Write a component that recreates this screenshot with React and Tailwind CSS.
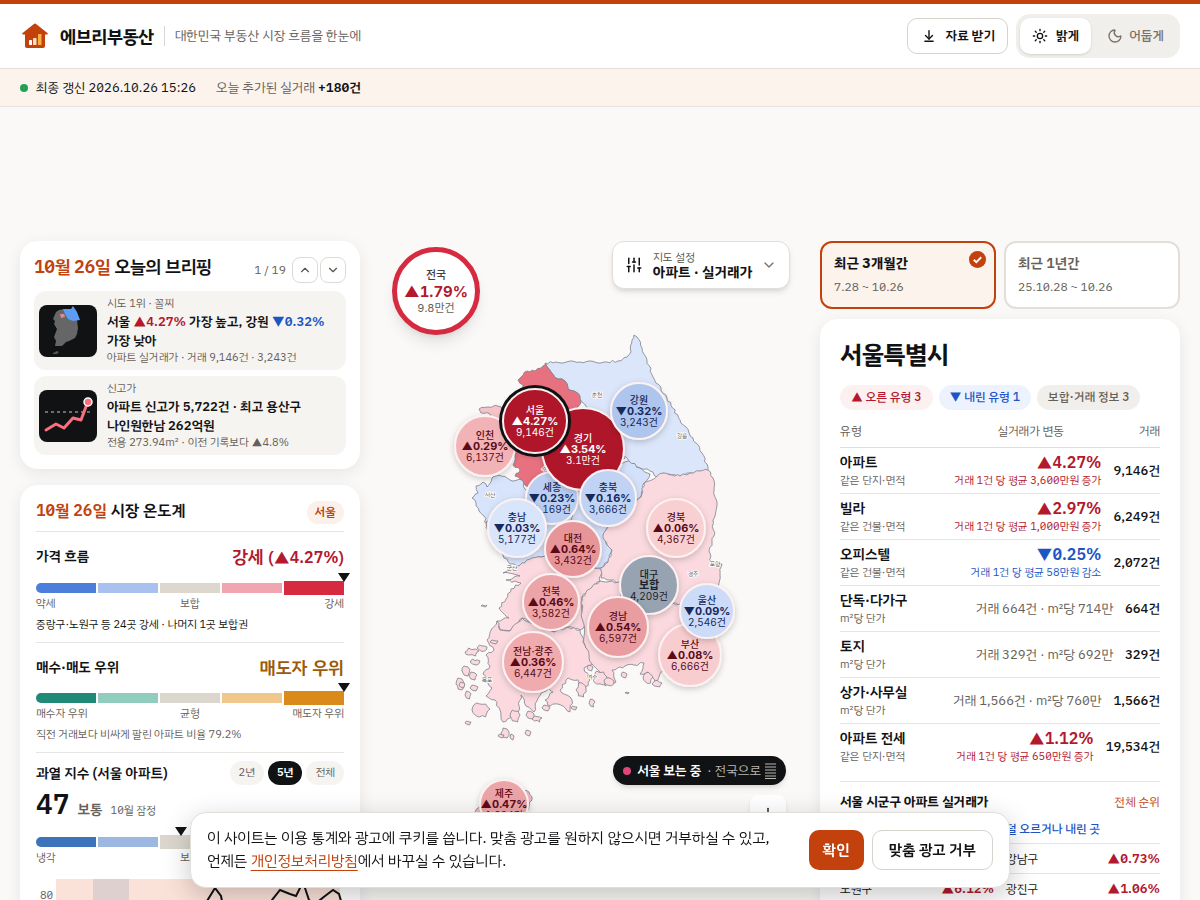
import { ArrowDownToLine, ChevronDown, ChevronUp, Moon, Plus, SlidersVertical, Sun } from "lucide-react";

const UP = "text-[#b3182d]";
const DOWN = "text-[#1d55c4]";

const bubbles = [
  { name: "세종", value: "▼0.23%", count: "1,169건", x: 552, y: 498, r: 26, fill: "#bccff2", ink: "#15295c" },
  { name: "인천", value: "▲0.29%", count: "6,137건", x: 485, y: 446, r: 30, fill: "#f2b3b7", ink: "#5c0a17" },
  { name: "경기", value: "▲3.54%", count: "3.1만건", x: 583, y: 449, r: 41, fill: "#b01629", ink: "#ffffff" },
  { name: "강원", value: "▼0.32%", count: "3,243건", x: 639, y: 411, r: 28, fill: "#aec5ed", ink: "#15295c" },
  { name: "충북", value: "▼0.16%", count: "3,666건", x: 608, y: 498, r: 28, fill: "#c1d3f4", ink: "#15295c" },
  { name: "충남", value: "▼0.03%", count: "5,177건", x: 517, y: 528, r: 29, fill: "#d9e5fb", ink: "#15295c" },
  { name: "대전", value: "▲0.64%", count: "3,432건", x: 573, y: 549, r: 28, fill: "#e69599", ink: "#5c0a17" },
  { name: "경북", value: "▲0.06%", count: "4,367건", x: 676, y: 528, r: 29, fill: "#f9d0d2", ink: "#5c0a17" },
  { name: "전북", value: "▲0.46%", count: "3,582건", x: 551, y: 602, r: 28, fill: "#eba4a7", ink: "#5c0a17" },
  { name: "대구", value: "보합", count: "4,209건", x: 649, y: 585, r: 29, fill: "#98a3b1", ink: "#1c222b" },
  { name: "경남", value: "▲0.54%", count: "6,597건", x: 618, y: 627, r: 30, fill: "#e99da1", ink: "#5c0a17" },
  { name: "부산", value: "▲0.08%", count: "6,666건", x: 690, y: 655, r: 31, fill: "#f8cdd0", ink: "#5c0a17" },
  { name: "울산", value: "▼0.09%", count: "2,546건", x: 707, y: 611, r: 27, fill: "#cbdbf8", ink: "#15295c" },
  { name: "전남·광주", value: "▲0.36%", count: "6,447건", x: 533, y: 662, r: 30, fill: "#efabae", ink: "#5c0a17" },
  { name: "제주", value: "▲0.47%", count: "1,034건", x: 504, y: 804, r: 24, fill: "#eba4a7", ink: "#5c0a17" },
  { name: "서울", value: "▲4.27%", count: "9,146건", x: 535, y: 421, r: 32, fill: "#b01629", ink: "#ffffff", active: true },
];

const regions = [
  {
    id: "gangwon",
    fill: "#dbe6fb",
    points: [[545, 363], [556, 362], [580, 362], [607, 362], [618, 361], [627, 357], [631, 352], [632, 340], [634, 335], [637, 337], [642, 348], [647, 360], [653, 377], [667, 398], [680, 420], [693, 438], [702, 453], [708, 467], [707, 472], [700, 471], [695, 475], [690, 473], [680, 476], [672, 475], [663, 473], [657, 477], [650, 471], [640, 468], [634, 464], [629, 461], [623, 456], [600, 430], [582, 402], [576, 392], [568, 389], [565, 381], [558, 379], [551, 372]],
  },
  {
    id: "gyeonggi",
    fill: "#e8717f",
    points: [[546, 364], [541, 368], [535, 371], [527, 371], [521, 377], [518, 380], [523, 385], [520, 400], [505, 430], [515, 456], [513, 465], [520, 470], [515, 476], [521, 480], [528, 487], [545, 484], [560, 492], [590, 486], [612, 470], [625, 458], [600, 430], [576, 409], [581, 403], [580, 396], [576, 392], [568, 389], [565, 381], [558, 379], [551, 372]],
  },
  { id: "ganghwa", fill: "#f6c3c8", points: [[479, 409], [488, 407], [498, 406], [505, 410], [504, 420], [496, 424], [490, 414], [481, 413]] },
  {
    id: "chungnam",
    fill: "#d8e4fb",
    points: [[499, 475], [510, 480], [522, 480], [526, 490], [560, 494], [575, 520], [585, 560], [570, 560], [545, 556], [532, 559], [527, 563], [518, 566], [510, 564], [503, 555], [497, 545], [488, 530], [484, 516], [479, 511], [476, 503], [472, 498], [478, 493], [476, 486], [483, 482], [487, 487], [492, 478]],
  },
  {
    id: "chungbuk",
    fill: "#d4e1fa",
    points: [[629, 461], [640, 468], [650, 474], [644, 483], [641, 497], [630, 505], [612, 520], [603, 535], [607, 545], [612, 550], [608, 562], [600, 568], [588, 566], [575, 550], [570, 500], [590, 480], [612, 470]],
  },
  {
    id: "gyeongbuk",
    fill: "#fbdadf",
    points: [[708, 470], [713, 478], [714, 490], [717, 502], [713, 520], [714, 536], [709, 551], [711, 562], [722, 564], [720, 575], [719, 590], [722, 603], [700, 605], [685, 607], [673, 603], [650, 612], [622, 600], [620, 583], [610, 580], [601, 578], [601, 568], [608, 562], [612, 550], [607, 545], [603, 535], [612, 520], [641, 497], [644, 483], [657, 476], [663, 473], [672, 475], [680, 476], [690, 473], [700, 471]],
  },
  {
    id: "jeonbuk",
    fill: "#fbd9de",
    points: [[522, 563], [532, 558], [545, 556], [570, 560], [588, 566], [601, 570], [600, 581], [592, 587], [582, 597], [582, 612], [585, 625], [580, 630], [568, 627], [554, 632], [540, 628], [522, 618], [514, 626], [510, 631], [500, 630], [497, 621], [509, 618], [499, 608], [506, 599], [511, 589], [521, 583], [506, 580], [520, 576], [503, 573], [512, 570]],
  },
  {
    id: "jeonnam",
    fill: "#fbd9de",
    points: [[497, 621], [500, 630], [510, 631], [522, 618], [540, 628], [554, 632], [568, 627], [580, 630], [585, 645], [592, 654], [593, 664], [584, 668], [590, 680], [585, 690], [578, 680], [568, 678], [560, 690], [572, 700], [570, 712], [558, 704], [550, 706], [545, 700], [553, 692], [548, 688], [538, 698], [534, 712], [526, 706], [521, 695], [518, 712], [510, 718], [503, 722], [500, 710], [495, 700], [486, 696], [492, 688], [483, 674], [490, 666], [486, 655], [494, 650], [487, 640]],
  },
  {
    id: "gyeongnam",
    fill: "#fbd9de",
    points: [[600, 581], [612, 581], [621, 584], [622, 600], [650, 612], [673, 603], [685, 607], [722, 603], [716, 625], [705, 645], [690, 655], [672, 655], [660, 660], [664, 670], [655, 682], [648, 672], [640, 674], [644, 663], [634, 665], [625, 666], [612, 670], [616, 682], [605, 686], [600, 672], [592, 664], [585, 645], [582, 612], [582, 597], [592, 587]],
  },
  { id: "jeju", fill: "#f5bfc4", points: [[475, 812], [482, 803], [500, 794], [520, 790], [529, 792], [532, 800], [526, 812], [500, 822], [480, 820]] },
];

const islands = [
  [472, 652, 7, 4], [482, 648, 5, 3], [466, 671, 4, 5], [460, 684, 4, 6], [473, 676, 4, 4], [468, 695, 3, 4], [481, 710, 9, 7],
  [462, 685, 3, 3], [475, 662, 5, 3], [474, 688, 4, 3], [468, 723, 3, 2], [505, 733, 4, 5], [501, 736, 3, 2], [512, 737, 2, 3],
  [528, 733, 3, 3], [515, 716, 5, 6], [530, 715, 4, 4], [537, 719, 5, 3], [546, 708, 4, 3], [592, 703, 3, 4], [574, 708, 3, 2],
  [581, 690, 5, 7], [600, 678, 7, 7], [609, 682, 5, 4], [648, 678, 5, 5], [657, 684, 5, 3], [627, 693, 2, 1], [624, 675, 3, 3],
  [484, 606, 3, 1], [488, 524, 2, 3], [494, 642, 4, 2], [590, 668, 3, 3],
];

const cities = [
  ["춘천", 597, 397], ["강릉", 682, 438], ["서산", 490, 497], ["수원", 547, 471], ["군산", 512, 570],
  ["포항", 715, 566], ["경주", 693, 576], ["목포", 487, 682], ["여수", 592, 679],
];

const types = [
  { name: "아파트", basis: "같은 단지·면적", rate: "▲4.27%", note: "거래 1건 당 평균 3,600만원 증가", tone: UP, count: "9,146건" },
  { name: "빌라", basis: "같은 건물·면적", rate: "▲2.97%", note: "거래 1건 당 평균 1,000만원 증가", tone: UP, count: "6,249건" },
  { name: "오피스텔", basis: "같은 건물·면적", rate: "▼0.25%", note: "거래 1건 당 평균 58만원 감소", tone: DOWN, count: "2,072건" },
  { name: "단독·다가구", basis: "m²당 단가", info: "거래 664건 · m²당 714만", count: "664건" },
  { name: "토지", basis: "m²당 단가", info: "거래 329건 · m²당 692만", count: "329건" },
  { name: "상가·사무실", basis: "m²당 단가", info: "거래 1,566건 · m²당 760만", count: "1,566건" },
  { name: "아파트 전세", basis: "같은 단지·면적", rate: "▲1.12%", note: "거래 1건 당 평균 650만원 증가", tone: UP, count: "19,534건" },
];

// Breaks every edge into short wobbly steps so borders read as a coastline.
function coastline(points) {
  let d = "";
  points.forEach(([x1, y1], i) => {
    const [x2, y2] = points[(i + 1) % points.length];
    const length = Math.hypot(x2 - x1, y2 - y1);
    const steps = Math.max(1, Math.round(length / 3));
    for (let s = 0; s < steps; s++) {
      const t = s / steps;
      const x = x1 + (x2 - x1) * t;
      const y = y1 + (y2 - y1) * t;
      const wobble = s === 0 ? 0 : Math.sin(x * 12.9 + y * 78.2) * 1.1;
      const px = x - ((y2 - y1) / length) * wobble;
      const py = y + ((x2 - x1) / length) * wobble;
      d += `${d ? "L" : "M"}${px.toFixed(1)} ${py.toFixed(1)}`;
    }
  });
  return d + "Z";
}

function Logo() {
  return (
    <svg viewBox="0 0 26 26" className="size-[26px]" aria-hidden="true">
      <path
        d="M11.6 1.3a2 2 0 0 1 2.8 0L25.4 10a.9.9 0 0 1-.6 1.6H23V23a2 2 0 0 1-2 2H5a2 2 0 0 1-2-2V11.600H1.200A.9.9 0 0 1 .6 10Z"
        fill="#c2410c"
      />
      <rect x="7" y="17" width="3" height="5" rx=".5" fill="#fff" />
      <rect x="11" y="15" width="3.500" height="7" rx=".5" fill="#fcdcc8" />
      <rect x="16" y="11" width="3.500" height="11" rx=".5" fill="#fbb040" />
    </svg>
  );
}

function Header() {
  return (
    <header className="flex h-[69px] items-center justify-between border-t-4 border-b border-t-[#c2410c] border-b-[#e2dfdb] bg-white pr-5 pl-[22px]">
      <div className="flex items-center">
        <a href="#home" className="flex items-center gap-3">
          <Logo />
          <span className="text-[18px] font-bold tracking-tight">에브리부동산</span>
        </a>
        <p className="ml-2.5 border-l border-[#d9d5d0] pl-2.5 text-[13px] text-[#65605a]">대한민국 부동산 시장 흐름을 한눈에</p>
      </div>
      <div className="flex items-center gap-2">
        <button className="flex h-9 items-center gap-2 rounded-[10px] border border-[#d6d3cd] bg-white px-3 text-[13px] font-semibold">
          <ArrowDownToLine className="mx-0.5 size-[14px]" strokeWidth={2.4} />
          자료 받기
        </button>
        <div className="flex h-11 items-center rounded-[14px] bg-[#f1efec] px-1">
          <button className="flex h-9 items-center gap-2 rounded-[10px] bg-white px-3 text-[13px] font-semibold shadow-sm">
            <Sun className="size-4" />
            밝게
          </button>
          <button className="flex h-9 items-center gap-1.5 px-3 pl-4 text-[13px] font-medium text-[#77716a]">
            <Moon className="size-4" />
            어둡게
          </button>
        </div>
      </div>
    </header>
  );
}

function KoreaThumb() {
  return (
    <svg viewBox="0 0 58 52" className="h-[52px] w-[58px] shrink-0 rounded-lg bg-[#111214]" aria-hidden="true">
      <path d="M17 7l3-2 5-1 7 1 1 5 5 5 1 8-1 6-2 4-6 3-3 1-4 4-7 0 1-5-2-4 3-8-3-5 1-3-2-2Z" fill="#666" />
      <path d="M24 4h8l2-3 4 6 3 8-7 1-5-2-3-5Z" fill="#5c9cf5" />
      <path d="M21 9l4 0 1 3-4 1Z" fill="#d98a94" />
      <path d="M14 48l4-2 2 1-2 2-4 0Z" fill="#555" />
    </svg>
  );
}

function RecordThumb() {
  return (
    <svg viewBox="0 0 58 52" className="h-[52px] w-[58px] shrink-0 rounded-lg bg-[#111214]" aria-hidden="true">
      <path d="M6 22h46" stroke="#8b8b8b" strokeWidth="1.500" strokeDasharray="3 3" />
      <path d="M7 40l10-6 8 4 9-10 8 2 6-16" fill="none" stroke="#fb6f80" strokeWidth="3" strokeLinecap="round" strokeLinejoin="round" />
      <circle cx="49" cy="12" r="4" fill="#fb6f80" stroke="#fff" strokeWidth="1.500" />
    </svg>
  );
}

function BriefingItem({ thumb, label, meta, children }) {
  return (
    <a href="#briefing" className="flex items-center gap-2.5 rounded-xl bg-[#f6f4f1] px-[5px] py-1">
      {thumb}
      <div className="min-w-0">
        <p className="text-[11px] leading-[17px] text-[#65605a]">{label}</p>
        <p className="text-[13px] leading-[19px] font-semibold">{children}</p>
        <p className="text-[11px] leading-4 text-[#65605a]">{meta}</p>
      </div>
    </a>
  );
}

function Briefing() {
  return (
    <section className="rounded-[18px] bg-white px-3.5 pt-3 pb-3.5 shadow-[0_4px_16px_rgba(0,0,0,0.08)]">
      <div className="mb-2 flex h-[30px] items-center justify-between">
        <h2 className="pb-1 text-[18px] font-semibold tracking-tight">
          <span className="text-[#c2410c]">10월 26일</span> 오늘의 브리핑
        </h2>
        <div className="flex items-center gap-0.5 pt-1">
          <span className="mr-1 text-[12px] text-[#65605a]">1 / 19</span>
          <button aria-label="이전" className="flex size-[26px] items-center justify-center rounded-lg border border-[#dedbd6] text-[#57534e]">
            <ChevronUp className="size-3.5" />
          </button>
          <button aria-label="다음" className="flex size-[26px] items-center justify-center rounded-lg border border-[#dedbd6] text-[#57534e]">
            <ChevronDown className="size-3.5" />
          </button>
        </div>
      </div>
      <div className="flex flex-col gap-1.5">
        <BriefingItem thumb={<KoreaThumb />} label="시도 1위 · 꼴찌" meta="아파트 실거래가 · 거래 9,146건 · 3,243건">
          서울 <span className={UP}>▲4.27%</span> 가장 높고, 강원 <span className={DOWN}>▼0.32%</span>
          <br />
          가장 낮아
        </BriefingItem>
        <BriefingItem thumb={<RecordThumb />} label="신고가" meta="전용 273.94m² · 이전 기록보다 ▲4.8%">
          아파트 신고가 5,722건 · 최고 용산구
          <br />
          나인원한남 262억원
        </BriefingItem>
      </div>
    </section>
  );
}

function Gauge({ colors, active, value, labels }) {
  return (
    <div>
      <div className="relative flex h-[14px] items-center gap-0.5">
        {colors.map((color, i) => (
          <div
            key={color}
            className={`flex-1 first:rounded-l-full last:rounded-r-full ${i === active ? "h-[14px]" : "h-[10px]"}`}
            style={{ backgroundColor: color }}
          />
        ))}
        <svg
          viewBox="0 0 12 9"
          className="absolute -top-2 h-[9px] w-3 -translate-x-1/2"
          style={{ left: `${value}%` }}
          aria-hidden="true"
        >
          <path d="M0 0h12L6 9Z" fill="#111214" />
        </svg>
      </div>
      <div className="flex justify-between text-[11px] leading-[18px] text-[#65605a]">
        {labels.map((label) => (
          <span key={label} className="flex-1 text-center first:text-left last:text-right">
            {label}
          </span>
        ))}
      </div>
    </div>
  );
}

function HeatChart() {
  return (
    <svg viewBox="0 0 308 60" className="mt-3 w-full" role="img" aria-label="과열 지수 추이">
      <rect x="20" y="0" width="284" height="60" fill="#fbe2d9" />
      <rect x="57" y="0" width="36" height="60" fill="#dfd0d0" />
      <text x="4" y="20" fontSize="11" fill="#65605a">80</text>
      <path d="M165 36l6-14 8-13 6 8 6 30 30 10 15-36 8-10 10 4 6 2 7-14 6 18 6 4 10-8 8-6 6 4 4 14" fill="none" stroke="#111214" strokeWidth="2" />
    </svg>
  );
}

function Thermometer() {
  return (
    <section className="rounded-[18px] bg-white px-4 pt-[9px] pb-4 shadow-[0_4px_16px_rgba(0,0,0,0.08)]">
      <div className="flex h-[38px] items-center justify-between border-b border-[#e7e5e1]">
        <h2 className="pb-1 text-[16px] font-semibold">
          <span className="text-[#c2410c]">10월 26일</span> 시장 온도계
        </h2>
        <span className="rounded-full bg-[#fcf1ea] px-2 text-[12px] leading-[23px] font-semibold text-[#c2410c]">서울</span>
      </div>

      <div className="border-b border-[#e7e5e1] pb-2">
        <div className="flex h-[49px] items-center justify-between">
          <h3 className="text-[14px] font-semibold">가격 흐름</h3>
          <strong className={`text-[18px] font-semibold ${UP}`}>
            강세 <span className="text-[16px]">(▲4.27%)</span>
          </strong>
        </div>
        <Gauge colors={["#4b7fdb", "#a8c1ef", "#ddd7cd", "#f0a6b0", "#d62a40"]} active={4} value={100} labels={["약세", "보합", "강세"]} />
        <p className="mt-[3px] text-[11px] leading-[18px]">중랑구·노원구 등 24곳 강세 · 나머지 1곳 보합권</p>
      </div>

      <div className="border-b border-[#e7e5e1] pb-2">
        <div className="flex h-12 items-center justify-between">
          <h3 className="text-[14px] font-semibold">매수·매도 우위</h3>
          <strong className="text-[18px] font-semibold text-[#9a5b0b]">매도자 우위</strong>
        </div>
        <Gauge colors={["#1f8a78", "#90cdbf", "#dcd7ce", "#f1c88b", "#d98a1b"]} active={4} value={100} labels={["매수자 우위", "균형", "매도자 우위"]} />
        <p className="mt-[3px] text-[11px] leading-[18px] text-[#65605a]">직전 거래보다 비싸게 팔린 아파트 비율 79.2%</p>
      </div>

      <div className="pt-2">
        <div className="flex items-center justify-between">
          <h3 className="text-[14px] font-semibold">과열 지수 (서울 아파트)</h3>
          <div className="flex gap-1 text-[11px] leading-6">
            <button className="rounded-full bg-[#f6f4f1] px-[9px] text-[#65605a]">2년</button>
            <button className="rounded-full bg-[#111214] px-[9px] font-semibold text-white">5년</button>
            <button className="rounded-full bg-[#f6f4f1] px-[9px] text-[#65605a]">전체</button>
          </div>
        </div>
        <p className="mb-1 flex items-baseline gap-2 leading-10">
          <strong className="text-[28px] font-semibold">47</strong>
          <span className="text-[14px] font-semibold text-[#65605a]">보통</span>
          <span className="text-[11px] text-[#65605a]">10월 잠정</span>
        </p>
        <Gauge colors={["#3d73bb", "#9cb8e0", "#dcd7ce", "#f0b9a0", "#d9603b"]} active={2} value={47} labels={["냉각", "보통", "과열"]} />
        <HeatChart />
      </div>
    </section>
  );
}

function KoreaMap() {
  return (
    <svg viewBox="380 241 420 659" className="block w-full" role="img" aria-label="시도별 아파트 실거래가 변동률">
      <defs>
        <filter id="bubble-shadow" x="-30%" y="-30%" width="160%" height="160%">
          <feDropShadow dx="0" dy="2" stdDeviation="3" floodOpacity="0.2" />
        </filter>
      </defs>
      <g stroke="#7d7f8c" strokeWidth="0.800" strokeLinejoin="round">
        {regions.map((region) => (
          <path key={region.id} d={coastline(region.points)} fill={region.fill} />
        ))}
        {islands.map(([x, y, rx, ry], i) => (
          <path
            key={i}
            fill="#fbd9de"
            d={coastline([[x - rx, y], [x - rx / 2, y - ry], [x + rx / 2, y - ry + 1], [x + rx, y - 1], [x + rx / 2, y + ry], [x - rx / 2, y + ry - 1]])}
          />
        ))}
      </g>
      <g fontSize="6" fill="#57534e" stroke="#fff" strokeWidth="1.500" paintOrder="stroke" textAnchor="middle">
        {cities.map(([name, x, y]) => (
          <text key={name} x={x} y={y}>{name}</text>
        ))}
      </g>
      <g textAnchor="middle" className="font-['Inter','Noto_Sans_CJK_KR',sans-serif] [font-variant-numeric:tabular-nums]">
        {bubbles.map((b) => (
          <g key={b.name} fill={b.ink}>
            {b.active && <circle cx={b.x} cy={b.y} r="36" fill="#111214" />}
            <circle cx={b.x} cy={b.y} r={b.r} fill={b.fill} stroke="#fdf1f1" strokeWidth="2" filter="url(#bubble-shadow)" />
            <text x={b.x} y={b.y - 7} fontSize="10" fontWeight="500">{b.name}</text>
            <text x={b.x} y={b.y + 4} fontSize="11" fontWeight="700">{b.value}</text>
            <text x={b.x} y={b.y + 15} fontSize="10">{b.count}</text>
          </g>
        ))}
      </g>
    </svg>
  );
}

function MapPanel() {
  return (
    <section className="relative">
      <KoreaMap />
      <button className="absolute top-1.5 left-3 flex size-[88px] flex-col items-center justify-center rounded-full border-[5px] border-[#d62a40] bg-white font-['Inter','Noto_Sans_CJK_KR',sans-serif] [font-variant-numeric:tabular-nums] shadow-lg">
        <span className="text-[11px] leading-4 font-medium text-[#44403c]">전국</span>
        <span className={`text-[15px] leading-[17px] font-bold ${UP}`}>▲1.79%</span>
        <span className="text-[11px] leading-4 text-[#65605a]">9.8만건</span>
      </button>
      <button className="absolute top-0 right-2.5 flex h-12 w-[178px] items-center gap-2.5 rounded-xl border border-[#e2dfdb] bg-white px-3 text-left shadow-md">
        <SlidersVertical className="size-[18px]" />
        <span className="flex-1 whitespace-nowrap">
          <span className="block text-[11px] leading-[15px] text-[#57534e]">지도 설정</span>
          <span className="block text-[14px] leading-4 font-bold">아파트 · 실거래가</span>
        </span>
        <ChevronDown className="-ml-2 size-4 text-[#77716a]" />
      </button>
      <button className="absolute top-[515px] right-3.5 flex h-[29px] items-center gap-1.5 rounded-full bg-[#111214] px-2.5 text-[13px] text-[#bab7b3] shadow-md">
        <span className="size-2 rounded-full bg-[#e0457b]" />
        <span className="font-semibold text-white">서울 보는 중</span>
        <span className="flex items-center gap-1">
          · 전국으로
          <svg viewBox="0 0 11 16" className="h-4 w-[11px]" aria-hidden="true">
            <path d="M0 1h11M0 4h11M0 7h11M0 10h11M0 13h11M0 15.500h11" stroke="currentColor" />
          </svg>
        </span>
      </button>
      <button aria-label="확대" className="absolute top-[554px] right-3.5 flex size-9 items-center justify-center rounded-lg bg-white shadow-md">
        <Plus className="size-4" />
      </button>
    </section>
  );
}

function PeriodTabs() {
  return (
    <div className="grid grid-cols-2 gap-2">
      <button className="flex h-[68px] justify-between rounded-xl border-2 border-[#c2410c] bg-[#fcf3ed] py-2 pr-2 pl-3 text-left">
        <span>
          <span className="block text-[14px] leading-[26px] font-bold">최근 3개월간</span>
          <span className="block text-[12px] leading-5 text-[#65605a]">7.28 ~ 10.26</span>
        </span>
        <svg viewBox="0 0 16 16" className="size-[17px]" aria-hidden="true">
          <circle cx="8" cy="8" r="8" fill="#c2410c" />
          <path d="M4.500 8.200l2.400 2.400 4.600-4.700" fill="none" stroke="#fff" strokeWidth="1.800" />
        </svg>
      </button>
      <button className="flex h-[68px] flex-col rounded-xl border-2 border-[#e2dfdb] bg-white py-2 pl-3 text-left">
        <span className="block text-[14px] leading-[26px] font-semibold text-[#65605a]">최근 1년간</span>
        <span className="block text-[12px] leading-5 text-[#65605a]">25.10.28 ~ 10.26</span>
      </button>
    </div>
  );
}

function TypeTable() {
  return (
    <table className="mt-2 block w-full">
      <thead className="block">
        <tr className="flex h-[30px] items-center gap-3 border-b border-[#e2dfdb] pb-1 text-[12px] text-[#65605a]">
          <th className="flex-1 text-left font-normal">유형</th>
          <th className="text-right font-normal">실거래가 변동</th>
          <th className="w-[84px] text-right font-normal">거래</th>
        </tr>
      </thead>
      <tbody className="block">
        {types.map((t) => (
          <tr key={t.name} className="flex h-[46px] items-center gap-3 border-b border-[#e7e5e1] last:border-0">
            <td className="flex-1">
              <p className="text-[14px] leading-5 font-semibold">{t.name}</p>
              <p className="text-[11px] leading-4 text-[#65605a]">{t.basis}</p>
            </td>
            <td className="text-right">
              {t.rate ? (
                <>
                  <p className={`text-[16px] leading-5 font-semibold ${t.tone}`}>{t.rate}</p>
                  <p className={`text-[11px] leading-4 ${t.tone}`}>{t.note}</p>
                </>
              ) : (
                <p className="text-[13px] text-[#65605a]">{t.info}</p>
              )}
            </td>
            <td className="text-right text-[13px] font-medium">{t.count}</td>
          </tr>
        ))}
      </tbody>
    </table>
  );
}

function DistrictList({ title, tone, rows }) {
  return (
    <div>
      <h4 className={`text-[12px] leading-[27px] font-medium whitespace-nowrap ${tone}`}>{title}</h4>
      {rows.map(([name, value]) => (
        <p key={name} className="flex h-[30px] items-center justify-between border-t border-[#e7e5e1] text-[12px]">
          {name}
          <span className={`text-[13px] font-semibold ${UP}`}>{value}</span>
        </p>
      ))}
    </div>
  );
}

function RegionCard() {
  return (
    <section className="mt-2.5 rounded-[18px] bg-white px-5 pt-[18px] pb-5 shadow-[0_4px_16px_rgba(0,0,0,0.08)]">
      <h2 className="text-[25px] leading-9 font-bold tracking-tight">서울특별시</h2>
      <div className="mt-3 flex gap-1.5 text-[12px] leading-[25px] font-medium">
        <span className={`rounded-full bg-[#fdf0f1] px-[11px] ${UP}`}>▲ 오른 유형 3</span>
        <span className={`rounded-full bg-[#ecf2fe] px-[11px] ${DOWN}`}>▼ 내린 유형 1</span>
        <span className="rounded-full bg-[#f1efec] px-[11px] text-[#65605a]">보합·거래 정보 3</span>
      </div>
      <TypeTable />
      <div className="mt-[11px] flex items-center justify-between border-t border-[#e7e5e1] pt-2">
        <h3 className="text-[13px] leading-6 font-bold">서울 시군구 아파트 실거래가</h3>
        <a href="#ranking" className="text-[12px] text-[#c2410c]">전체 순위</a>
      </div>
      <div className="mt-0.5 grid grid-cols-2 gap-3">
        <DistrictList title="더 오른 곳" tone={UP} rows={[["중랑구", "▲7.05%"], ["노원구", "▲6.12%"]]} />
        <DistrictList title="덜 오르거나 내린 곳" tone={DOWN} rows={[["강남구", "▲0.73%"], ["광진구", "▲1.06%"]]} />
      </div>
    </section>
  );
}

function CookieBanner() {
  return (
    <div className="fixed inset-x-4 bottom-3 mx-auto flex max-w-[820px] items-center justify-between gap-4 rounded-2xl border border-[#e2dfdb] bg-white px-4 py-3.5 shadow-[0_8px_28px_rgba(0,0,0,0.22)]">
      <p className="text-[15px] leading-[23px]">
        이 사이트는 이용 통계와 광고에 쿠키를 씁니다. 맞춤 광고를 원하지 않으시면 거부하실 수 있고,
        <br />
        언제든{" "}
        <a href="#privacy" className="text-[#c2410c] underline underline-offset-4">개인정보처리방침</a>
        에서 바꾸실 수 있습니다.
      </p>
      <div className="flex shrink-0 gap-2 text-[15px] font-semibold">
        <button className="h-10 rounded-[10px] bg-[#c2410c] px-3.5 text-white">확인</button>
        <button className="h-10 rounded-[10px] border border-[#d6d3cd] bg-white px-4">맞춤 광고 거부</button>
      </div>
    </div>
  );
}

export default function App() {
  return (
    <div className="h-screen overflow-hidden bg-[#faf9f7] font-['IBM_Plex_Sans_KR','Noto_Sans_CJK_KR',sans-serif] text-[#111214] slashed-zero tabular-nums">
      <Header />
      <div className="flex h-[38px] items-center gap-5 border-b border-[#e8e2dc] bg-[#fcf3ed] px-5 text-[13px]">
        <p className="flex items-center gap-2">
          <span className="size-2 rounded-full bg-[#22a155]" />
          최종 갱신 2026.10.26 15:26
        </p>
        <p className="text-[#65605a]">
          오늘 추가된 실거래 <strong className="font-semibold text-[#111214]">+180건</strong>
        </p>
      </div>
      <main className="mt-[134px] grid grid-cols-[340px_minmax(0,1fr)_360px] px-5">
        <div className="flex flex-col gap-4">
          <Briefing />
          <Thermometer />
        </div>
        <div className="px-5">
          <MapPanel />
        </div>
        <div>
          <PeriodTabs />
          <RegionCard />
        </div>
      </main>
      <CookieBanner />
    </div>
  );
}
